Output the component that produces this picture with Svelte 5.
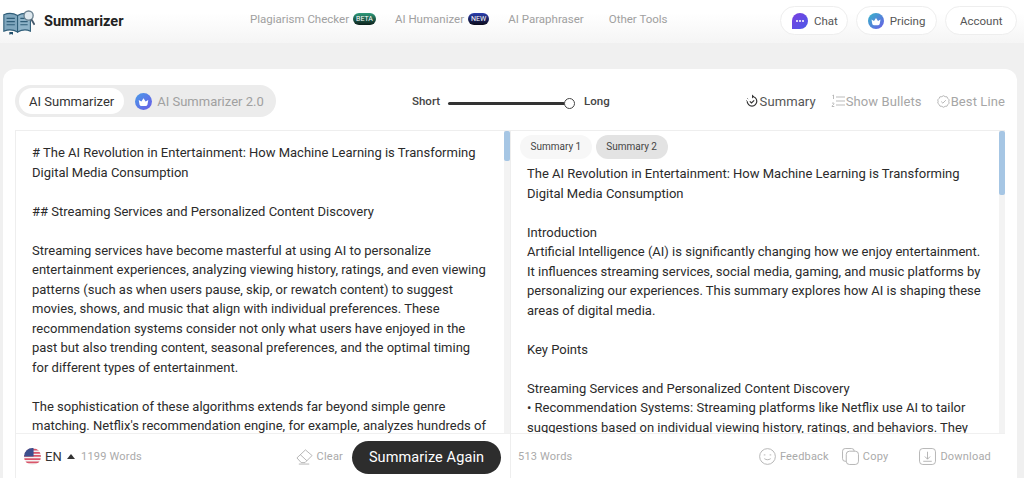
<script>
  const navItems = [
    { label: 'Plagiarism Checker', badge: 'BETA', kind: 'beta' },
    { label: 'AI Humanizer', badge: 'NEW', kind: 'new' },
    { label: 'AI Paraphraser' },
    { label: 'Other Tools' }
  ];

  const sourceText = [
    ['# The AI Revolution in Entertainment: How Machine Learning is Transforming', 'Digital Media Consumption'],
    ['## Streaming Services and Personalized Content Discovery'],
    [
      'Streaming services have become masterful at using AI to personalize',
      'entertainment experiences, analyzing viewing history, ratings, and even viewing',
      'patterns (such as when users pause, skip, or rewatch content) to suggest',
      'movies, shows, and music that align with individual preferences. These',
      'recommendation systems consider not only what users have enjoyed in the',
      'past but also trending content, seasonal preferences, and the optimal timing',
      'for different types of entertainment.'
    ],
    [
      'The sophistication of these algorithms extends far beyond simple genre',
      "matching. Netflix's recommendation engine, for example, analyzes hundreds of"
    ]
  ];

  const summaryText = [
    ['The AI Revolution in Entertainment: How Machine Learning is Transforming', 'Digital Media Consumption'],
    [
      'Introduction',
      'Artificial Intelligence (AI) is significantly changing how we enjoy entertainment.',
      'It influences streaming services, social media, gaming, and music platforms by',
      'personalizing our experiences. This summary explores how AI is shaping these',
      'areas of digital media.'
    ],
    ['Key Points'],
    [
      'Streaming Services and Personalized Content Discovery',
      '• Recommendation Systems: Streaming platforms like Netflix use AI to tailor',
      'suggestions based on individual viewing history, ratings, and behaviors. They'
    ]
  ];
</script>

<div class="page">
  <header class="topbar">
    <div class="brand">
      <svg class="logo" viewBox="0 0 36 28" width="33" height="26">
        <path d="M2 6c5-2 10-2 15 1v18c-5-3-10-3-15-1z" fill="#7fa6bd" stroke="#2f5d78" stroke-width="1.2"/>
        <path d="M17 7c5-3 10-3 14-1v18c-4-2-9-2-14 1z" fill="#8fb4c9" stroke="#2f5d78" stroke-width="1.2"/>
        <path d="M5 10h9M5 13.500h9M5 17h9M20 10h8M20 13.500h8M20 17h8" stroke="#2f5d78" stroke-width="1.300"/>
        <path d="M8 25h4v3l-2-1-2 1z" fill="#23506c"/>
        <circle cx="29" cy="7" r="5" fill="#dfe9ef" stroke="#6b8291" stroke-width="1.500"/>
        <path d="M32 11l3.500 6" stroke="#44586a" stroke-width="2"/>
      </svg>
      <span class="brand-name">Summarizer</span>
    </div>
    <nav class="nav">
      {#each navItems as item}
        <span class="nav-item">
          {item.label}
          {#if item.badge}
            <span class="badge {item.kind}">{item.badge}</span>
          {/if}
        </span>
      {/each}
    </nav>
    <div class="top-actions">
      <button class="pill chat">
        <svg viewBox="0 0 16 16" width="16" height="16">
          <defs>
            <linearGradient id="chatg" x1="0" y1="0" x2="1" y2="1">
              <stop offset="0" stop-color="#7a3fe0"/><stop offset="1" stop-color="#4a5ae8"/>
            </linearGradient>
          </defs>
          <path d="M8 0a8 8 0 1 1 0 16H0V8a8 8 0 0 1 8-8z" fill="url(#chatg)"/>
          <circle cx="5" cy="8" r="1" fill="#fff"/><circle cx="8" cy="8" r="1" fill="#fff"/><circle cx="11" cy="8" r="1" fill="#fff"/>
        </svg>
        Chat
      </button>
      <button class="pill">
        <svg viewBox="0 0 16 16" width="16" height="16">
          <defs>
            <linearGradient id="crowng" x1="0" y1="0" x2="1" y2="1">
              <stop offset="0" stop-color="#35b6c9"/><stop offset="1" stop-color="#6a5be6"/>
            </linearGradient>
          </defs>
          <circle cx="8" cy="8" r="8" fill="url(#crowng)"/>
          <path d="M3.500 6.500l2.500 1.500 2-3 2 3 2.500-1.500-.8 4.500a2 2 0 0 1-2 1.200H6.300a2 2 0 0 1-2-1.200z" fill="#fff"/>
        </svg>
        Pricing
      </button>
      <button class="pill plain">Account</button>
    </div>
  </header>

  <main class="card">
    <div class="toolbar">
      <div class="tabs">
        <span class="tab active">AI Summarizer</span>
        <span class="tab">
          <svg viewBox="0 0 16 16" width="17" height="17">
            <defs>
              <linearGradient id="crowng2" x1="0" y1="0" x2="1" y2="1">
                <stop offset="0" stop-color="#4a9be8"/><stop offset="1" stop-color="#6a5be6"/>
              </linearGradient>
            </defs>
            <circle cx="8" cy="8" r="8" fill="url(#crowng2)"/>
            <path d="M3.500 6.500l2.500 1.500 2-3 2 3 2.500-1.500-.8 4.500a2 2 0 0 1-2 1.200H6.300a2 2 0 0 1-2-1.200z" fill="#fff"/>
          </svg>
          AI Summarizer 2.0
        </span>
      </div>
      <div class="length">
        <span>Short</span>
        <span class="track"><span class="thumb"></span></span>
        <span>Long</span>
      </div>
      <div class="modes">
        <span class="mode on">
          <svg viewBox="0 0 14 14" width="14" height="14" fill="none" stroke="#333" stroke-width="1.200">
            <path d="M7 2.500a4.800 4.800 0 1 1-4.800 4.800"/>
            <path d="M7 .5v4l2.200-2z" fill="#333" stroke="none"/>
            <path d="M4.800 7.300l1.700 1.700 2.700-2.700"/>
            <path d="M2.500 4.500l.6.600M1 6.500h.5" stroke-width="1"/>
          </svg>
          Summary
        </span>
        <span class="mode">
          <svg viewBox="0 0 14 14" width="14" height="14" fill="none" stroke="#aaa" stroke-width="0.800">
            <path d="M5 3h9M5 7h9M5 11h9"/>
            <path d="M1.500 1.500l1-.5v4M1 9.500c1-1 2-.5 2 .3 0 .7-2 1.500-2 2.700h2.300"/>
          </svg>
          Show Bullets
        </span>
        <span class="mode">
          <svg viewBox="0 0 14 14" width="13" height="13" fill="none" stroke="#aaa" stroke-width="0.900">
            <path d="M7 .8l1.800 1 2 .2.900 1.800 1.400 1.400-.4 1.800.4 1.800-1.400 1.400-.9 1.800-2 .2-1.800 1-1.800-1-2-.2-.9-1.800L.8 8.800l.4-1.800-.4-1.800 1.400-1.400.9-1.800 2-.2z"/>
            <path d="M4.500 7l1.800 1.800 3.200-3.200"/>
          </svg>
          Best Line
        </span>
      </div>
    </div>

    <div class="panels">
      <section class="panel left">
        <div class="scroll">
          <div class="text">
            {#each sourceText as para}
              <p>{#each para as line}<span class="line">{line}</span>{/each}</p>
            {/each}
          </div>
          <div class="scrollbar"><span class="bar short"></span></div>
        </div>
        <div class="foot">
          <svg class="flag" viewBox="0 0 16 16" width="17" height="17">
            <defs><clipPath id="flagc"><circle cx="8" cy="8" r="8"/></clipPath></defs>
            <g clip-path="url(#flagc)">
              <rect width="16" height="16" fill="#f3f3f3"/>
              <path d="M0 1.500h16M0 4.500h16M0 7.500h16M0 10.500h16M0 13.500h16" stroke="#d9566a" stroke-width="1.600"/>
              <rect width="9" height="8" fill="#3c4f8e"/>
            </g>
          </svg>
          <span class="lang">EN</span>
          <span class="caret"></span>
          <span class="count">1199 Words</span>
          <span class="clear">
            <svg viewBox="0 0 18 18" width="17" height="17" fill="none" stroke="#aaa" stroke-width="0.900">
              <path d="M1 10.500L10 2l7 6-7.500 7.500H5.500z"/>
              <path d="M4.500 7l7 6.500"/>
              <path d="M3 17h11"/>
            </svg>
            Clear
          </span>
          <button class="again">Summarize Again</button>
        </div>
      </section>

      <section class="panel right">
        <div class="scroll">
          <div class="text">
            <div class="chips">
              <span class="chip">Summary 1</span>
              <span class="chip on">Summary 2</span>
            </div>
            {#each summaryText as para}
              <p>{#each para as line}<span class="line">{line}</span>{/each}</p>
            {/each}
          </div>
          <div class="scrollbar"><span class="bar long"></span></div>
        </div>
        <div class="foot">
          <span class="count">513 Words</span>
          <span class="tool first">
            <svg viewBox="0 0 16 16" width="17" height="17" fill="none" stroke="#aaa" stroke-width="0.800">
              <circle cx="8" cy="8" r="7.400"/>
              <path d="M5 10c2 1.400 4 1.400 6 0M4.500 6.500h1.500M10 6.500h1.500"/>
            </svg>
            Feedback
          </span>
          <span class="tool">
            <svg viewBox="0 0 16 16" width="17" height="17" fill="none" stroke="#aaa" stroke-width="0.800">
              <rect x="4" y="3" width="11.500" height="12.500" rx="3"/>
              <path d="M4 12.500H3a2.500 2.500 0 0 1-2.500-2.500V3A2.500 2.500 0 0 1 3 .5h6A2.500 2.500 0 0 1 11.500 3"/>
            </svg>
            Copy
          </span>
          <span class="tool wide">
            <svg viewBox="0 0 16 16" width="17" height="17" fill="none" stroke="#aaa" stroke-width="0.800">
              <rect x=".5" y=".5" width="15" height="15" rx="3"/>
              <path d="M8 3.500v7M5.500 8L8 10.500 10.500 8M4 12.500h8"/>
            </svg>
            Download
          </span>
        </div>
      </section>
    </div>
  </main>
</div>

<style>
  :global(body) {
    margin: 0;
    background: #f0f0f0;
    font-family: Roboto, "Liberation Sans", sans-serif;
  }

  .page {
    height: 478px;
    display: flex;
    flex-direction: column;
    overflow: hidden;
  }

  .topbar {
    height: 43px;
    flex-shrink: 0;
    display: flex;
    align-items: center;
    background: linear-gradient(#fff 30%, #f5f5f5);
    padding: 0 7px 0 2px;
  }

  .brand {
    display: flex;
    align-items: center;
    gap: 9px;
    width: 248px;
  }

  .logo { flex-shrink: 0; }

  .brand-name {
    font-size: 14.5px;
    font-weight: 700;
    color: #222;
  }

  .nav {
    display: flex;
    align-items: center;
    gap: 19px;
    flex: 1;
    margin-bottom: 6px;
    font-size: 11.5px;
    color: #a0a0a0;
  }

  .nav-item {
    display: flex;
    align-items: center;
    gap: 4px;
  }

  .nav-item:last-child { margin-left: 6px; }

  .badge {
    font-size: 7px;
    line-height: 12px;
    padding: 0 3px;
    border-radius: 6px;
    color: #fff;
  }

  .badge.beta { background: linear-gradient(#2f9c7c, #0c1f1a); }
  .badge.new { background: linear-gradient(#2c3fb0, #0a0a18); }

  .top-actions {
    display: flex;
    gap: 8px;
    margin-bottom: 2px;
  }

  .pill {
    height: 29px;
    display: flex;
    align-items: center;
    gap: 6px;
    padding: 0 11px;
    background: #fff;
    border: 1px solid #eeeeee;
    border-radius: 15px;
    font: inherit;
    font-size: 11.5px;
    color: #555;
  }

  .pill.chat { padding-right: 9px; }
  .pill.plain { padding: 0 13.500px; }

  .card {
    flex: 1;
    min-height: 0;
    margin: 26px 7px 0 3px;
    background: #fff;
    border-radius: 12px 12px 0 0;
    display: flex;
    flex-direction: column;
    padding: 0 12px;
  }

  .toolbar {
    height: 61px;
    flex-shrink: 0;
    box-sizing: border-box;
    padding-top: 3px;
    display: flex;
    align-items: center;
  }

  .tabs {
    display: flex;
    align-items: center;
    height: 32px;
    padding: 0 4px;
    box-sizing: border-box;
    background: #ececec;
    border-radius: 16px;
    font-size: 13px;
    color: #a0a0a0;
    width: 261px;
    flex-shrink: 0;
    white-space: nowrap;
  }

  .tab {
    display: flex;
    align-items: center;
    gap: 5px;
    height: 26px;
    padding: 0 7px;
    border-radius: 13px;
  }

  .tab:last-child { margin-left: 4px; }

  .tab.active {
    background: #fff;
    color: #333;
    padding: 0 10px;
  }

  .length {
    margin-left: 136px;
    display: flex;
    align-items: center;
    gap: 8px;
    font-size: 11.5px;
    font-weight: 500;
    color: #444;
  }

  .track {
    width: 117px;
    height: 3px;
    margin-top: 5px;
    margin-right: 11px;
    background: #333;
    border-radius: 2px;
    display: flex;
    align-items: center;
    justify-content: flex-end;
  }

  .thumb {
    width: 9px;
    height: 9px;
    background: #fff;
    border: 1px solid #444;
    border-radius: 50%;
    margin-right: -10px;
    flex-shrink: 0;
  }

  .modes {
    margin-left: auto;
    display: flex;
    align-items: center;
    gap: 15px;
    font-size: 13px;
    letter-spacing: 0.1px;
    color: #a6a6a6;
  }

  .mode {
    display: flex;
    align-items: center;
    gap: 1px;
  }

  .mode.on { color: #555; }

  .panels {
    flex: 1;
    min-height: 0;
    display: flex;
    border-top: 1px solid #eeeeee;
  }

  .panel {
    display: flex;
    flex-direction: column;
    min-width: 0;
    width: 495px;
    box-sizing: border-box;
    border-left: 1px solid #eeeeee;
  }

  .scroll {
    flex: 1;
    min-height: 0;
    display: flex;
    overflow: hidden;
  }

  .text {
    flex: 1;
    min-width: 0;
    font-size: 13px;
    line-height: 19.5px;
    color: #2b2b2b;
    white-space: nowrap;
    overflow: hidden;
  }

  .left .text { padding: 12px 0 0 16px; }
  .right .text { padding: 4px 0 0 16px; }

  p { margin: 0 0 19.5px; }

  .line { display: block; }

  .chips {
    display: flex;
    gap: 4px;
    margin-left: -7px;
    margin-bottom: 5px;
  }

  .chip {
    height: 24px;
    line-height: 24px;
    padding: 0 10.500px;
    border-radius: 12px;
    background: #f7f7f7;
    font-size: 10px;
    color: #444;
  }

  .chip.on { background: #e3e3e3; }

  .scrollbar {
    width: 6px;
    flex-shrink: 0;
    background: #f3f3f3;
  }

  .bar {
    display: block;
    width: 100%;
    background: #a6c6e4;
    border-radius: 2px;
  }

  .bar.short { height: 30px; }
  .bar.long { height: 64px; }

  .foot {
    height: 45px;
    flex-shrink: 0;
    display: flex;
    align-items: center;
    border-top: 1px solid #f0f0f0;
    font-size: 11px;
    letter-spacing: 0.2px;
    color: #aaa;
    padding-left: 8px;
    box-sizing: border-box;
  }

  .right .foot { padding-left: 7px; }

  .lang {
    margin-left: 4px;
    font-size: 13px;
    color: #333;
  }

  .caret {
    margin-left: 5px;
    width: 0;
    height: 0;
    border-left: 4px solid transparent;
    border-right: 4px solid transparent;
    border-bottom: 5px solid #333;
  }

  .count { margin-left: 6px; }
  .right .count { margin-left: 0; }

  .clear {
    margin-left: auto;
    display: flex;
    align-items: center;
    gap: 4px;
  }

  .again {
    margin: 2px 9px 0 9px;
    width: 149px;
    height: 33px;
    background: #2d2d2d;
    color: #fff;
    border: none;
    border-radius: 17px;
    font: inherit;
    font-size: 14.5px;
    letter-spacing: 0.1px;
  }

  .tool {
    display: flex;
    align-items: center;
    gap: 4px;
    margin-left: 13px;
  }

  .tool.first { margin-left: auto; }

  .tool.wide {
    margin-left: 31px;
    margin-right: 14px;
  }
</style>
